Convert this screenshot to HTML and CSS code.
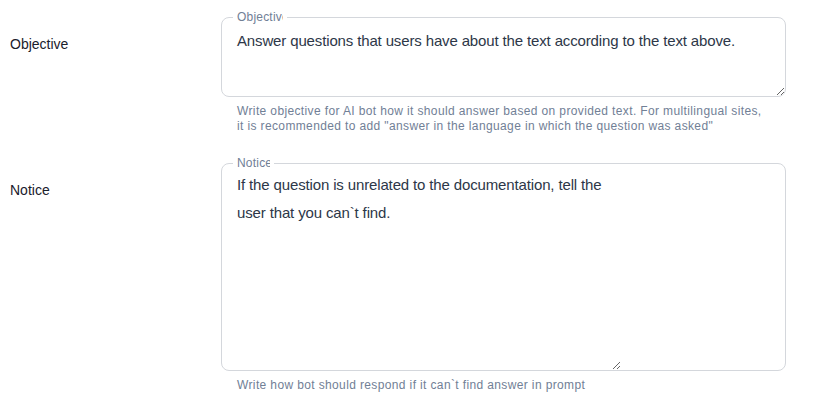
FILE: index.html
```html
<!DOCTYPE html>
<html lang="en">
<head>
    <meta charset="UTF-8">
    <meta name="viewport" content="width=device-width, initial-scale=1.0">
    <title>Prompt settings</title>
    <link rel="stylesheet" href="styles.css">
</head>
<body>
    <div class="form">
        <div class="form-row">
            <label class="form-label" for="objective">Objective</label>
            <div class="form-field">
                <fieldset class="outlined">
                    <legend><span>Objective</span></legend>
                    <textarea id="objective" class="objective-input" rows="3">Answer questions that users have about the text according to the text above.</textarea>
                </fieldset>
                <p class="helper">Write objective for AI bot how it should answer based on provided text. For multilingual sites,<br>it is recommended to add "answer in the language in which the question was asked"</p>
            </div>
        </div>

        <div class="form-row">
            <label class="form-label" for="notice">Notice</label>
            <div class="form-field">
                <fieldset class="outlined">
                    <legend class="legend-short"><span>Notice</span></legend>
                    <textarea id="notice" class="notice-input">If the question is unrelated to the documentation, tell the user that you can`t find.</textarea>
                </fieldset>
                <p class="helper">Write how bot should respond if it can`t find answer in prompt</p>
            </div>
        </div>
    </div>
</body>
</html>
```

FILE: styles.css
```css
*{
    margin: 0;
    padding: 0;
    box-sizing: border-box;
}
body{
    font-family: "Liberation Sans", Arial, sans-serif;
    background: #ffffff;
    padding-top: 11px;
}

.form-row{
    display: flex;
    margin-bottom: 23px;
}
.form-row:last-child{
    margin-bottom: 0;
}

.form-label{
    width: 221px;
    padding: 25px 0 0 10px;
    font-size: 14px;
    line-height: 16px;
    color: #1a202c;
}

.form-field{
    width: 565px;
}

.outlined{
    border: 1px solid #d4d7dc;
    border-radius: 8px;
    padding: 0;
    min-width: 0;
}
.outlined legend{
    margin-left: 11px;
    padding: 0 4px;
    height: 13px;
    font-size: 12px;
    line-height: 13px;
    letter-spacing: 0.2px;
    color: #718096;
}
/* legend is clipped like the original label */
.outlined legend span{
    display: block;
    width: 46px;
    overflow: hidden;
    white-space: nowrap;
}
.outlined .legend-short span{
    width: 33px;
}

textarea{
    display: block;
    border: none;
    outline: none;
    background: transparent;
    font-family: "Liberation Sans", Arial, sans-serif;
    font-size: 15px;
    letter-spacing: -0.14px;
    color: #2d3748;
    padding: 8px 15px 0 15px;
}
.objective-input{
    width: 100%;
    height: 72px;
    line-height: 18px;
}
.notice-input{
    width: 399px;
    height: 200px;
    line-height: 28px;
    padding-top: 1px;
}

.helper{
    margin-top: 7px;
    padding-left: 16px;
    font-size: 12px;
    line-height: 15px;
    letter-spacing: 0.37px;
    color: #718096;
}
```
